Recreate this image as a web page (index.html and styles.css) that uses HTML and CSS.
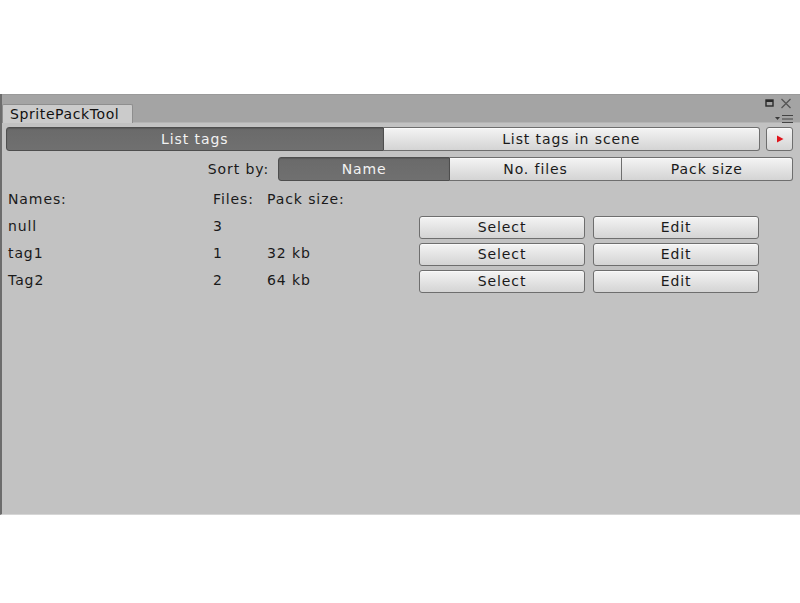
FILE: index.html
```html
<!DOCTYPE html>
<html>
<head>
<meta charset="utf-8">
<link rel="stylesheet" href="styles.css">
</head>
<body>
<div class="window">
  <div class="titlebar">
    <div class="tab">SpritePackTool</div>
    <div class="wincontrols">
      <div class="wc-top">
        <svg width="9" height="8" viewBox="0 0 9 8"><rect x="1" y="1" width="7" height="6" fill="none" stroke="#2a2a2a" stroke-width="1.4"/><rect x="1" y="1" width="7" height="2" fill="#2a2a2a"/></svg>
        <svg width="12" height="11" viewBox="0 0 12 11"><path d="M1.5 1 L10.5 10 M10.5 1 L1.5 10" stroke="#555" stroke-width="1.3"/></svg>
      </div>
      <div class="wc-menu">
        <svg width="20" height="10" viewBox="0 0 20 10"><path d="M1 3 L6 3 L3.5 6 Z" fill="#3a3a3a"/><path d="M8 1.5 H19 M8 5 H19 M8 8.5 H19" stroke="#444" stroke-width="1.2"/></svg>
      </div>
    </div>
  </div>
  <div class="content">
    <div class="toolbar">
      <div class="seg">
        <div class="btn sel seg-first">List tags</div>
        <div class="btn seg-last">List tags in scene</div>
      </div>
      <div class="btn play">
        <svg width="8" height="8" viewBox="0 0 8 8"><path d="M1 0.5 L7.5 4 L1 7.5 Z" fill="#e0141c"/></svg>
      </div>
    </div>
    <div class="sortrow">
      <div class="sortlabel">Sort by:</div>
      <div class="seg sortseg">
        <div class="btn sel seg-first">Name</div>
        <div class="btn seg-mid">No. files</div>
        <div class="btn seg-last">Pack size</div>
      </div>
    </div>
    <div class="table">
      <div class="row head">
        <div class="cell">Names:</div>
        <div class="cell">Files:</div>
        <div class="cell">Pack size:</div>
      </div>
      <div class="row">
        <div class="cell">null</div>
        <div class="cell">3</div>
        <div class="cell"></div>
        <div class="btn rbtn">Select</div>
        <div class="btn rbtn rbtn-edit">Edit</div>
      </div>
      <div class="row">
        <div class="cell">tag1</div>
        <div class="cell">1</div>
        <div class="cell">32 kb</div>
        <div class="btn rbtn">Select</div>
        <div class="btn rbtn rbtn-edit">Edit</div>
      </div>
      <div class="row">
        <div class="cell">Tag2</div>
        <div class="cell">2</div>
        <div class="cell">64 kb</div>
        <div class="btn rbtn">Select</div>
        <div class="btn rbtn rbtn-edit">Edit</div>
      </div>
    </div>
  </div>
</div>
</body>
</html>
```

FILE: styles.css
```css
html, body {
  margin: 0;
  padding: 0;
  background: #ffffff;
}
body {
  font-family: "DejaVu Sans", Verdana, sans-serif;
  font-size: 14px;
  letter-spacing: 0.9px;
  color: #1a1a1a;
}
.window {
  margin-top: 94px;
  width: 800px;
  height: 421px;
  box-sizing: border-box;
  background: #c2c2c2;
  border-left: 2px solid #6c6c6c;
  border-bottom: 1px solid #d6d6d6;
  display: flex;
  flex-direction: column;
}
.titlebar {
  height: 29px;
  flex: none;
  background: #a4a4a4;
  border-top: 1px solid #9a9a9a;
  box-sizing: border-box;
  display: flex;
  align-items: flex-end;
  border-bottom: 1px solid #b4b4b4;
}
.tab {
  width: 131px;
  height: 19px;
  box-sizing: border-box;
  background: #cbcbcb;
  border: 1px solid #8e8e8e;
  border-bottom: none;
  border-radius: 2px 2px 0 0;
  padding-left: 7px;
  line-height: 19px;
  color: #111;
  letter-spacing: 0.6px;
  margin-bottom: -1px;
}
.wincontrols {
  margin-left: auto;
  align-self: stretch;
  display: flex;
  flex-direction: column;
  align-items: flex-end;
  padding-right: 8px;
  padding-top: 2px;
}
.wc-top {
  display: flex;
  align-items: center;
  gap: 6px;
  height: 12px;
}
.wc-menu {
  height: 10px;
  margin-top: 2px;
  margin-right: -2px;
}
.content {
  padding: 4px 7px 0 4px;
}
.toolbar {
  display: flex;
  height: 24px;
  gap: 6px;
}
.seg {
  display: flex;
  flex: 1;
}
.btn {
  box-sizing: border-box;
  height: 24px;
  line-height: 22px;
  text-align: center;
  border: 1px solid #6e6e6e;
  background: linear-gradient(#f4f4f4, #e2e2e2 55%, #d4d4d4);
  border-radius: 3px;
  color: #1a1a1a;
  box-shadow: inset 0 1px 0 #fafafa;
}
.seg .btn {
  flex: 1;
}
.seg-first {
  border-radius: 3px 0 0 3px;
}
.seg-mid {
  border-radius: 0;
  border-left: none;
}
.seg-last {
  border-radius: 0 3px 3px 0;
  border-left: none;
}
.btn.sel {
  background: linear-gradient(#6a6a6a, #707070);
  border-color: #4e4e4e;
  color: #f2f2f2;
  box-shadow: inset 0 1px 1px #5a5a5a;
}
.play {
  width: 27px;
  flex: none;
  display: flex;
  align-items: center;
  justify-content: center;
}
.sortrow {
  display: flex;
  margin-top: 6px;
  height: 24px;
}
.sortlabel {
  width: 272px;
  flex: none;
  text-align: right;
  padding-right: 9px;
  box-sizing: border-box;
  line-height: 24px;
}
.table {
  margin-top: 4px;
  padding-left: 2px;
}
.row {
  display: grid;
  grid-template-columns: 205px 54px 152px 166px 174px;
  height: 27px;
  align-items: center;
}
.cell {
  margin-bottom: 4px;
  white-space: nowrap;
}
.head {
  margin-bottom: 2px;
}
.head .cell {
  margin-bottom: 0;
}
.rbtn {
  height: 23px;
  line-height: 21px;
}
.rbtn-edit {
  margin-left: 8px;
}
```
